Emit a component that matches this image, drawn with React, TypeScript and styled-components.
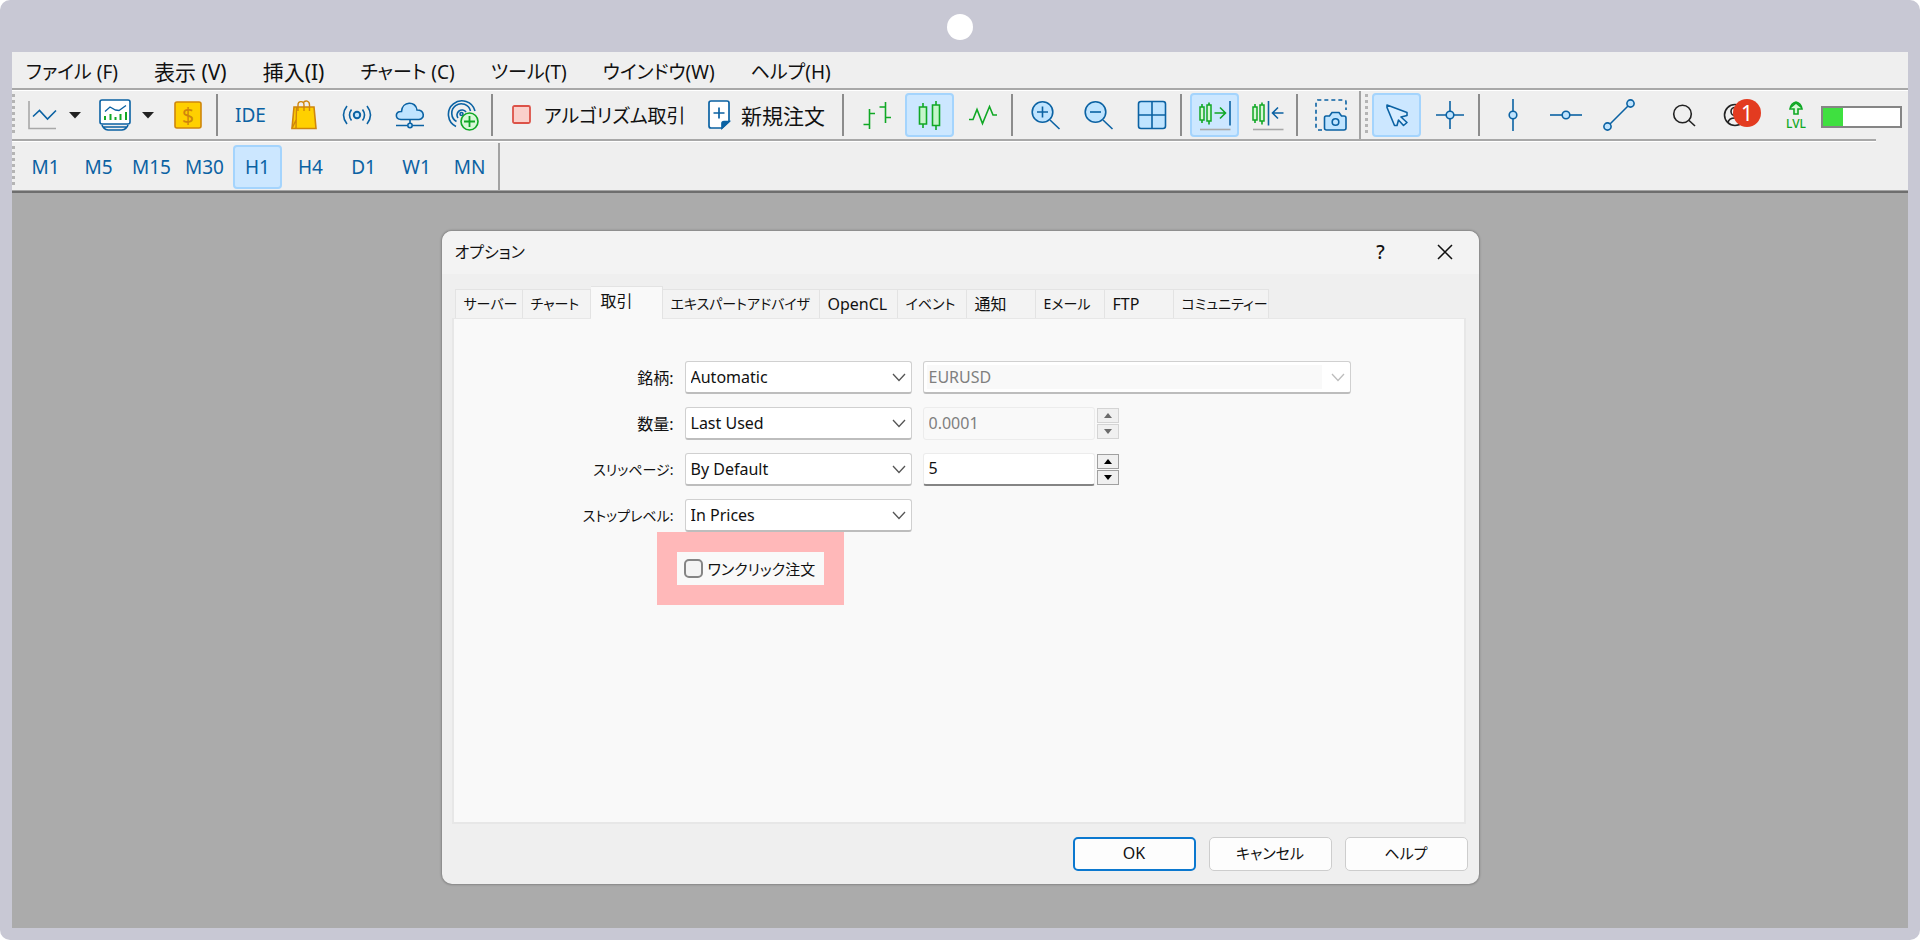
import React from "react";
import styled, { createGlobalStyle, css } from "styled-components";

const BLUE = "#0b62a3";
const SKY = "#bfe4ff";
const GREEN = "#10a825";

const GlobalStyle = createGlobalStyle`
  *, *::before, *::after { box-sizing: border-box; }
  body {
    margin: 0;
    background: #fff;
    color: #111;
    font-family: "Noto Sans", "Noto Sans CJK JP", sans-serif;
    font-feature-settings: "palt";
  }
  button, input, select {
    font: inherit;
    font-feature-settings: inherit;
    color: inherit;
  }
`;

/* ---------- frame ---------- */

const Frame = styled.div`
  display: flex;
  flex-direction: column;
  min-height: 100vh;
  padding: 0 12px 12px;
  border-radius: 10px;
  background: #c8c8d4;
`;

const FrameTop = styled.div`
  display: flex;
  align-items: center;
  justify-content: center;
  height: 52px;
  padding-top: 2px;
`;

const CameraDot = styled.span`
  width: 26px;
  height: 26px;
  border-radius: 50%;
  background: #fff;
`;

const Screen = styled.div`
  display: flex;
  flex: 1;
  flex-direction: column;
  background: #ababab;
`;

const Chrome = styled.header`
  background: #efefef;
  border-bottom: 2px solid #6e6e6e;
  box-shadow: inset 0 -1px 0 #a3a3a3;
`;

const Divider = styled.div<{ $short?: boolean }>`
  height: 3px;
  margin-right: ${(p) => (p.$short ? "32px" : "0")};
  border-top: 2px solid #a8a8a8;
  background: #fff;
`;

/* ---------- menu ---------- */

const MenuBar = styled.nav`
  display: flex;
  align-items: center;
  gap: 36px;
  height: 36px;
  padding: 4px 0 0 14px;
`;

const MenuItem = styled.button<{ $kanji?: boolean }>`
  padding: 0;
  border: 0;
  background: none;
  font-size: ${(p) => (p.$kanji ? "21px" : "19px")};
  line-height: 32px;
  white-space: nowrap;
`;

/* ---------- toolbars ---------- */

const Bar = styled.div`
  display: flex;
  align-items: center;
  height: 48px;
`;

const TimeframeBar = styled(Bar)`
  height: 49px;
`;

const Grip = styled.span`
  width: 3px;
  height: 42px;
  background: repeating-linear-gradient(#b4b4b4 0 3px, transparent 3px 6px);
`;

const Tools = styled.div<{ $start?: number }>`
  display: flex;
  align-items: center;
  gap: 4px;
  padding-left: ${(p) => p.$start ?? 0}px;
`;

const RightTools = styled(Tools)`
  gap: 5px;
  margin-left: auto;
  padding-right: 6px;
`;

const Tool = styled.button<{ $active?: boolean }>`
  display: flex;
  align-items: center;
  justify-content: center;
  width: 49px;
  height: 44px;
  padding: 0;
  border: 2px solid transparent;
  border-radius: 4px;
  background: none;
  color: ${BLUE};
  font-size: 19px;
  ${(p) =>
    p.$active &&
    css`
      border-color: #a4d4fd;
      background: #cce7ff;
    `}
  svg { display: block; flex: none; }
`;

const WideTool = styled(Tool)<{ $width: number; $kanji?: boolean }>`
  justify-content: flex-start;
  width: ${(p) => p.$width}px;
  padding: 0 0 0 9px;
  gap: ${(p) => (p.$kanji ? "9px" : "12px")};
  color: #111;
  font-size: ${(p) => (p.$kanji ? "21px" : "19px")};
  white-space: nowrap;
`;

const Split = styled.div`
  display: flex;
`;

const Arrow = styled.button`
  width: 20px;
  height: 44px;
  padding: 0 0 0 3px;
  border: 0;
  background: none;
  svg { display: block; }
`;

const Separator = styled.span<{ $full?: boolean }>`
  width: 2px;
  height: ${(p) => (p.$full ? "48px" : "42px")};
  margin-right: ${(p) => (p.$full ? "0" : "4px")};
  background: ${(p) => (p.$full ? "#a3a3a3" : "#8c8c8c")};
`;

const Account = styled(Tool)`
  position: relative;
`;

const LevelTool = styled(Tool)`
  width: 41px;
  margin-left: 8px;
`;

const Badge = styled.span`
  position: absolute;
  top: 4px;
  right: -1px;
  width: 28px;
  height: 28px;
  border-radius: 50%;
  background: #e33b20;
  color: #fff;
  font-size: 21px;
  line-height: 28px;
  text-align: center;
`;

const Meter = styled.div`
  width: 81px;
  height: 22px;
  margin-top: 3px;
  border: 2px solid #858585;
  background: #fff;
`;

const MeterFill = styled.div`
  height: 100%;
  background: #3fe040;
`;

/* ---------- dialog ---------- */

const Workspace = styled.main`
  display: flex;
  flex: 1;
  align-items: flex-start;
  justify-content: center;
  padding: 38px 24px;
`;

const Dialog = styled.section`
  flex: 0 1 1037px;
  border-radius: 10px;
  background: #efefef;
  box-shadow: 0 0 2px 1px rgba(0, 0, 0, 0.22);
`;

const TitleBar = styled.div`
  display: flex;
  align-items: center;
  height: 43px;
  padding: 0 12px 2px 13px;
  border-radius: 10px 10px 0 0;
  background: #f3f3f3;
`;

const Title = styled.h1`
  flex: 1;
  margin: 0;
  font-size: 16px;
  font-weight: 400;
  line-height: 24px;
`;

const TitleButton = styled.button`
  display: flex;
  align-items: center;
  justify-content: center;
  width: 44px;
  height: 36px;
  margin-left: 20px;
  padding: 0;
  border: 0;
  background: none;
  font-size: 19px;
  font-weight: 500;
`;

const DialogBody = styled.div`
  padding: 12px 13px 0 10px;
`;

const TabList = styled.div`
  display: flex;
  align-items: flex-end;
  padding-left: 3px;
`;

const Tab = styled.button<{ $width: number; $kana?: boolean; $selected?: boolean }>`
  width: ${(p) => p.$width}px;
  height: 29px;
  padding: 0 0 0 8px;
  border: 1px solid #e3e3e3;
  border-left-width: 0;
  border-bottom: 0;
  background: #f3f3f3;
  font-size: ${(p) => (p.$kana ? "14px" : "16px")};
  line-height: 24px;
  text-align: left;
  white-space: nowrap;
  &:first-child { border-left-width: 1px; }
  ${(p) =>
    p.$selected &&
    css`
      height: 33px;
      margin-bottom: -1px;
      padding: 0 0 4px 10px;
      background: #f9f9f9;
    `}
`;

const Panel = styled.div`
  min-height: 506px;
  padding: 42px 0 0;
  border: 2px solid #e7e7e7;
  border-top-width: 1px;
  background: #f9f9f9;
`;

const Fields = styled.div`
  display: grid;
  gap: 13px;
`;

const Field = styled.div`
  display: grid;
  grid-template-columns: 220px 227px minmax(0, 428px);
  column-gap: 11px;
  align-items: center;
  height: 33px;
`;

const FieldLabel = styled.label<{ $kana?: boolean }>`
  font-size: ${(p) => (p.$kana ? "14px" : "16px")};
  line-height: 24px;
  text-align: right;
  white-space: nowrap;
`;

const SelectBox = styled.div`
  display: grid;
  align-items: center;
  > * { grid-area: 1 / 1; }
  > svg {
    justify-self: end;
    margin-right: 6px;
    pointer-events: none;
  }
`;

const Select = styled.select`
  appearance: none;
  width: 100%;
  height: 33px;
  padding: 0 28px 0 5px;
  border: 1px solid #d0d0d0;
  border-bottom: 2px solid #bdbdbd;
  border-radius: 3px;
  background: #fff;
  font-size: 16px;
  &:disabled {
    color: #7f7f7f;
    opacity: 1;
    box-shadow: inset 0 0 0 3px #fff;
    background: linear-gradient(90deg, #f9f9f9 calc(100% - 28px), #fff 0);
  }
`;

const Spin = styled.div`
  display: flex;
  align-items: center;
  gap: 2px;
`;

const NumberInput = styled.input`
  width: 172px;
  height: 33px;
  padding: 0 5px 2px;
  border: 1px solid #ececec;
  border-bottom: 2px solid #858585;
  border-radius: 3px;
  background: #fff;
  font-size: 16px;
  &:disabled {
    color: #7f7f7f;
    background: #f9f9f9;
    border-bottom: 1px solid #ececec;
  }
`;

const SpinButtons = styled.div`
  display: grid;
  gap: 1px;
`;

const SpinButton = styled.button`
  display: flex;
  align-items: center;
  justify-content: center;
  width: 22px;
  height: 15px;
  padding: 0;
  border: 1px solid #a0a0a0;
  background: #f0f0f0;
  color: #000;
  &:disabled { border-color: #d4d4d4; color: #6b6b6b; }
`;

const Highlight = styled.div`
  width: max-content;
  margin-left: 203px;
  border: 20px solid #ffb8b9;
`;

const CheckLabel = styled.label`
  display: flex;
  align-items: center;
  gap: 5px;
  height: 33px;
  padding: 0 9px 0 7px;
  font-size: 15px;
  line-height: 24px;
`;

const Checkbox = styled.input`
  appearance: none;
  width: 19px;
  height: 19px;
  margin: 0;
  border: 2px solid #858585;
  border-radius: 5px;
  background: #f4f4f4;
`;

const Actions = styled.div`
  display: flex;
  justify-content: flex-end;
  gap: 13px;
  padding: 13px 11px 13px;
`;

const ActionButton = styled.button<{ $primary?: boolean }>`
  width: 123px;
  height: 34px;
  padding: 0 0 2px;
  border: ${(p) => (p.$primary ? "2px solid #0b78cf" : "1px solid #cdcdcd")};
  border-radius: 5px;
  background: #fdfdfd;
  font-size: ${(p) => (p.$primary ? "16px" : "15px")};
  line-height: 24px;
`;

/* ---------- icons ---------- */

type IconProps = { color?: string; children: React.ReactNode };
const Icon = ({ color = BLUE, children }: IconProps) => (
  <svg width="32" height="32" viewBox="0 0 32 32" fill="none" stroke={color} strokeWidth="1.6" aria-hidden="true">
    {children}
  </svg>
);

const LineStudyIcon = () => (
  <Icon>
    <path d="M3 2V29.5H30" stroke="#a8a8a8" />
    <path d="M7 17.5 13.5 11.5 21.5 20 30 11.5" />
  </Icon>
);
const MonitorIcon = () => (
  <Icon>
    <rect x="1" y="1" width="30" height="24" rx="2" fill="#fff" />
    <path d="M6 12.5 11 8 16.5 11 20 11.5 27 6.5" strokeWidth="1.3" />
    <path d="M6 21v-4M11.5 21v-6M16.5 21v-3M21.5 21v-6M27 21v-8" stroke={GREEN} strokeWidth="2" />
    <path d="M3 26C4 29 6 30.5 9 31H23C26 30.5 28 29 29 26M4.5 28H27.5" />
  </Icon>
);
const CoinIcon = () => (
  <Icon color="#cf860c">
    <rect x="3" y="3" width="26" height="26" rx="2" fill="#ffd000" />
    <text x="16" y="23.5" textAnchor="middle" fontSize="21" fill="#cf860c" stroke="none" fontFamily="Noto Sans">$</text>
  </Icon>
);
const BagIcon = () => (
  <Icon color="#cf860c">
    <path d="M6 8H26L28 29.5H4Z" fill="#ffd000" />
    <path d="M8.5 8 8 29.5M4 29.5 8.5 20M10 12V6C10 1.5 16 1.5 16 6V12M15 4C17.5 .5 21.5 2 21.5 6V12" strokeWidth="1.4" />
  </Icon>
);
const SignalIcon = () => (
  <Icon>
    <circle cx="16" cy="16" r="3.2" fill={SKY} strokeWidth="2" />
    <path d="M10.5 10.5Q6.5 16 10.5 21.5M21.5 10.5Q25.5 16 21.5 21.5M6 7Q-1 16 6 25M26 7Q33 16 26 25" />
  </Icon>
);
const CloudIcon = () => (
  <Icon>
    <path d="M7 20.5C.5 20 1 12 7.5 12.5C8 2 22 1.5 23 11C31 11 31 20 25 20.5Z" fill={SKY} />
    <path d="M16 20.5V25M2 26.5H13M19 26.5H30" />
    <circle cx="16" cy="26.5" r="2.2" fill={SKY} />
  </Icon>
);
const VpsIcon = () => (
  <Icon>
    <path d="M28 12A13.5 13.5 0 1 0 9 27.5M23.5 12A9.5 9.5 0 1 0 9.5 22.5M19 13A5 5 0 1 0 11 19" />
    <circle cx="14.5" cy="15" r="1.5" />
    <circle cx="22.5" cy="22.5" r="8.5" fill="#d8f7d8" stroke={GREEN} />
    <path d="M22.5 17V28M17 22.5H28" stroke={GREEN} strokeWidth="1.8" />
  </Icon>
);
const StopIcon = () => (
  <svg width="20" height="20" viewBox="0 0 20 20" aria-hidden="true">
    <rect x="1" y="1" width="17" height="17" rx="1.5" fill="#fad0cb" stroke="#dc5248" strokeWidth="1.8" />
  </svg>
);
const NewOrderIcon = () => (
  <svg width="24" height="30" viewBox="0 0 24 30" fill="none" stroke={BLUE} strokeWidth="1.7" aria-hidden="true">
    <path d="M3 1H19Q21 1 21 3V21.5L14 28H3Q1 28 1 26V3Q1 1 3 1Z" fill="#fff" />
    <path d="M21 21.5H16Q14 21.5 14 23.5V28Z" fill={BLUE} />
    <path d="M11 7.5V18.5M5.5 13H16.5" />
  </svg>
);
const BarsIcon = () => (
  <Icon color={GREEN}>
    <path d="M8.5 10V30M8.5 14.5H14M2.5 25.5H8.5M24.5 3V24M18.5 8H24.5M24.5 18.5H30" />
  </Icon>
);
const CandlesIcon = () => (
  <Icon color={GREEN}>
    <path d="M9 4V8M9 25V29M22 2V6M22 26.5V31" />
    <path d="M5.5 8H12.5V25H5.5ZM18.5 6H25.5V26.5H18.5Z" fill="#c5f5cb" />
  </Icon>
);
const ZigzagIcon = () => (
  <Icon color={GREEN}>
    <path d="M2 20.5H6L10 10.5 15.5 24.5 22.5 7.5 26 16H30" />
  </Icon>
);
const ZoomIcon = ({ plus }: { plus?: boolean }) => (
  <Icon>
    <circle cx="12.5" cy="13" r="10.3" fill={SKY} />
    <path d="M20 21 29.5 30" />
    <path d={plus ? "M12.5 7.5V18.5M7 13H18" : "M7 13H18"} />
  </Icon>
);
const GridIcon = () => (
  <Icon>
    <rect x="2.5" y="2.5" width="27" height="27" rx="2.5" fill={SKY} />
    <path d="M16 2.5V29.5M2.5 16H29.5" />
  </Icon>
);
const ShiftIcon = ({ left }: { left?: boolean }) => (
  <Icon color={GREEN}>
    <path d="M3 5V8M3 21V24M10 3.5V6M10 22V25.5" />
    <path d="M1 8H5V21H1ZM8 6H12V22H8Z" fill="#d6f7d6" strokeWidth="1.5" />
    {left ? (
      <path d="M16.5 2V26.5M31.5 14H21M26 8.5 20.5 14 26 19.5" stroke={BLUE} />
    ) : (
      <>
        <path d="M15.5 14H26M21 8.5 26.5 14 21 19.5" />
        <path d="M31 2V26.5" stroke={BLUE} />
      </>
    )}
    <path d="M1 30.5H31.5" stroke="#a8a8a8" />
  </Icon>
);
const SnapshotIcon = () => (
  <Icon>
    <path d="M7 31H3Q1 31 1 29V3Q1 1 3 1H29Q31 1 31 3V11" strokeDasharray="4 3" />
    <path d="M11 17H14.5L17 13.5H24L26.5 17H29Q31 17 31 19V29Q31 31 29 31H11.5Q9.5 31 9.5 29V19Q9.5 17 11 17Z" fill={SKY} />
    <circle cx="20.5" cy="23" r="3.3" />
  </Icon>
);
const CursorIcon = () => (
  <Icon>
    <path d="M6 6 26 13.5V16.5L20 18 26 23.5 22.5 26.5 17.5 21 16 26.5H13.5L6 8.5Z" fill="#d8edff" strokeLinejoin="round" />
  </Icon>
);
const CrosshairIcon = () => (
  <Icon>
    <path d="M16 2V30M2 16H30" />
    <circle cx="16" cy="16" r="3.8" fill={SKY} />
  </Icon>
);
const VerticalIcon = () => (
  <Icon>
    <path d="M16 0V32" />
    <circle cx="16" cy="16" r="3.8" fill={SKY} />
  </Icon>
);
const HorizontalIcon = () => (
  <Icon>
    <path d="M0 16H32" />
    <circle cx="16" cy="16" r="3.8" fill={SKY} />
  </Icon>
);
const TrendIcon = () => (
  <Icon>
    <path d="M4.5 27.5 27.5 4.5" />
    <circle cx="4.5" cy="27.5" r="3.6" fill={SKY} />
    <circle cx="27.5" cy="4.5" r="3.6" fill={SKY} />
  </Icon>
);
const SearchIcon = () => (
  <Icon color="#222">
    <circle cx="14.5" cy="15" r="8.8" />
    <path d="M20.5 21 27 27" />
  </Icon>
);
const UserIcon = () => (
  <Icon color="#222">
    <circle cx="13" cy="16" r="10.5" />
    <circle cx="13" cy="12.5" r="4" />
    <path d="M6 23.5C7 17.5 19 17.5 20 23.5" />
  </Icon>
);
const LevelIcon = () => (
  <Icon color={GREEN}>
    <path d="M14 15V10H10Q11 4 16 3Q21 4 22 10H18V15Z M10 9 16 4 22 9" fill="#d6f7d6" />
    <text x="16" y="28.5" textAnchor="middle" fontSize="12" fontWeight="500" fill={GREEN} stroke="none" fontFamily="Noto Sans">LVL</text>
  </Icon>
);
const ArrowIcon = () => (
  <svg width="12" height="7" viewBox="0 0 12 7" aria-hidden="true">
    <path d="M0 0H12L6 6.5Z" fill="#222" />
  </svg>
);
const Chevron = ({ muted }: { muted?: boolean }) => (
  <svg width="14" height="9" viewBox="0 0 14 9" fill="none" stroke={muted ? "#bdbdbd" : "#555"} strokeWidth="1.3" aria-hidden="true">
    <path d="M1 1 7 7.5 13 1" />
  </svg>
);
const SpinArrow = ({ down }: { down?: boolean }) => (
  <svg width="8" height="5" viewBox="0 0 8 5" fill="currentColor" aria-hidden="true">
    <path d={down ? "M0 0H8L4 5Z" : "M0 5H8L4 0Z"} />
  </svg>
);

/* ---------- data ---------- */

const menus = [
  { name: "ファイル (F)" },
  { name: "表示 (V)", kanji: true },
  { name: "挿入(I)", kanji: true },
  { name: "チャート (C)" },
  { name: "ツール(T)" },
  { name: "ウインドウ(W)" },
  { name: "ヘルプ(H)" },
];
const timeframes = ["M1", "M5", "M15", "M30", "H1", "H4", "D1", "W1", "MN"];
const tabs = [
  { name: "サーバー", width: 68, kana: true },
  { name: "チャート", width: 68, kana: true },
  { name: "取引", width: 72 },
  { name: "エキスパートアドバイザ", width: 157, kana: true },
  { name: "OpenCL", width: 78 },
  { name: "イベント", width: 69, kana: true },
  { name: "通知", width: 69 },
  { name: "Eメール", width: 69, kana: true },
  { name: "FTP", width: 69 },
  { name: "コミュニティー", width: 95, kana: true },
];

const Combo = ({ id, value, disabled, label }: { id?: string; value: string; disabled?: boolean; label?: string }) => (
  <SelectBox>
    <Select id={id} aria-label={label} disabled={disabled} defaultValue={value}>
      <option>{value}</option>
    </Select>
    <Chevron muted={disabled} />
  </SelectBox>
);

const Spinner = ({ value, disabled, label }: { value: string; disabled?: boolean; label: string }) => (
  <Spin>
    <NumberInput type="text" inputMode="decimal" aria-label={label} defaultValue={value} disabled={disabled} />
    <SpinButtons>
      <SpinButton type="button" aria-label="増やす" disabled={disabled}><SpinArrow /></SpinButton>
      <SpinButton type="button" aria-label="減らす" disabled={disabled}><SpinArrow down /></SpinButton>
    </SpinButtons>
  </Spin>
);

const MainToolbar = () => (
  <Bar role="toolbar">
    <Grip />
    <Tools $start={2}>
      <Split>
        <Tool aria-label="ライン"><LineStudyIcon /></Tool>
        <Arrow aria-label="ラインの一覧"><ArrowIcon /></Arrow>
      </Split>
      <Split>
        <Tool aria-label="インディケータ"><MonitorIcon /></Tool>
        <Arrow aria-label="インディケータの一覧"><ArrowIcon /></Arrow>
      </Split>
      <Tool aria-label="銘柄"><CoinIcon /></Tool>
      <Separator />
      <Tool>IDE</Tool>
      <Tool aria-label="マーケット"><BagIcon /></Tool>
      <Tool aria-label="シグナル"><SignalIcon /></Tool>
      <Tool aria-label="クラウド"><CloudIcon /></Tool>
      <Tool aria-label="VPS"><VpsIcon /></Tool>
      <Separator />
      <WideTool $width={192}><StopIcon />アルゴリズム取引</WideTool>
      <WideTool $width={141} $kanji><NewOrderIcon />新規注文</WideTool>
      <Separator />
      <Tool aria-label="バーチャート"><BarsIcon /></Tool>
      <Tool $active aria-label="ローソク足"><CandlesIcon /></Tool>
      <Tool aria-label="ラインチャート"><ZigzagIcon /></Tool>
      <Separator />
      <Tool aria-label="ズームイン"><ZoomIcon plus /></Tool>
      <Tool aria-label="ズームアウト"><ZoomIcon /></Tool>
      <Tool aria-label="タイル表示"><GridIcon /></Tool>
      <Separator />
      <Tool $active aria-label="自動スクロール"><ShiftIcon /></Tool>
      <Tool aria-label="チャートシフト"><ShiftIcon left /></Tool>
      <Separator />
      <Tool aria-label="スクリーンショット"><SnapshotIcon /></Tool>
      <Separator $full />
      <Grip />
      <Tool $active aria-label="カーソル"><CursorIcon /></Tool>
      <Tool aria-label="十字線"><CrosshairIcon /></Tool>
      <Separator />
      <Tool aria-label="垂直線"><VerticalIcon /></Tool>
      <Tool aria-label="水平線"><HorizontalIcon /></Tool>
      <Tool aria-label="トレンドライン"><TrendIcon /></Tool>
    </Tools>
    <RightTools>
      <Tool aria-label="検索"><SearchIcon /></Tool>
      <Account aria-label="アカウント"><UserIcon /><Badge>1</Badge></Account>
      <LevelTool aria-label="レベル"><LevelIcon /></LevelTool>
      <Meter><MeterFill style={{ width: "26%" }} /></Meter>
    </RightTools>
  </Bar>
);

const OptionsDialog = () => (
  <Dialog role="dialog" aria-labelledby="dialog-title">
    <TitleBar>
      <Title id="dialog-title">オプション</Title>
      <TitleButton type="button">?</TitleButton>
      <TitleButton type="button" aria-label="閉じる">
        <svg width="16" height="16" viewBox="0 0 16 16" stroke="#111" strokeWidth="1.5" aria-hidden="true">
          <path d="M1 1 15 15M15 1 1 15" />
        </svg>
      </TitleButton>
    </TitleBar>
    <DialogBody>
      <TabList role="tablist">
        {tabs.map((t) => (
          <Tab
            key={t.name}
            type="button"
            role="tab"
            $width={t.width}
            $kana={t.kana}
            $selected={t.name === "取引"}
            aria-selected={t.name === "取引"}
          >
            {t.name}
          </Tab>
        ))}
      </TabList>
      <Panel role="tabpanel">
        <Fields>
          <Field>
            <FieldLabel htmlFor="symbol">銘柄:</FieldLabel>
            <Combo id="symbol" value="Automatic" />
            <Combo value="EURUSD" label="銘柄の既定値" disabled />
          </Field>
          <Field>
            <FieldLabel htmlFor="volume">数量:</FieldLabel>
            <Combo id="volume" value="Last Used" />
            <Spinner value="0.0001" label="数量の既定値" disabled />
          </Field>
          <Field>
            <FieldLabel htmlFor="slippage" $kana>スリッページ:</FieldLabel>
            <Combo id="slippage" value="By Default" />
            <Spinner value="5" label="スリッページの既定値" />
          </Field>
          <Field>
            <FieldLabel htmlFor="stops" $kana>ストップレベル:</FieldLabel>
            <Combo id="stops" value="In Prices" />
          </Field>
        </Fields>
        <Highlight>
          <CheckLabel>
            <Checkbox type="checkbox" />
            ワンクリック注文
          </CheckLabel>
        </Highlight>
      </Panel>
    </DialogBody>
    <Actions>
      <ActionButton type="button" $primary>OK</ActionButton>
      <ActionButton type="button">キャンセル</ActionButton>
      <ActionButton type="button">ヘルプ</ActionButton>
    </Actions>
  </Dialog>
);

export default function App() {
  return (
    <>
      <GlobalStyle />
      <Frame>
        <FrameTop><CameraDot /></FrameTop>
        <Screen>
          <Chrome>
            <MenuBar>
              {menus.map((m) => <MenuItem key={m.name} type="button" $kanji={m.kanji}>{m.name}</MenuItem>)}
            </MenuBar>
            <Divider />
            <MainToolbar />
            <Divider $short />
            <TimeframeBar role="toolbar">
              <Grip />
              <Tools $start={6}>
                {timeframes.map((t) => <Tool key={t} type="button" $active={t === "H1"}>{t}</Tool>)}
                <Separator $full />
              </Tools>
            </TimeframeBar>
          </Chrome>
          <Workspace>
            <OptionsDialog />
          </Workspace>
        </Screen>
      </Frame>
    </>
  );
}
